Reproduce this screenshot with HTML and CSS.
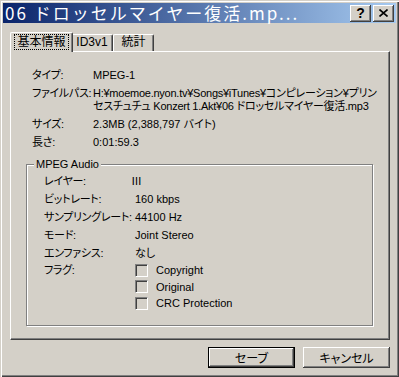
FILE: index.html
```html
<!DOCTYPE html>
<html lang="ja">
<head>
    <meta charset="UTF-8">
    <meta name="viewport" content="width=device-width, initial-scale=1.0">
    <title>プロパティ</title>
    <link rel="stylesheet" href="styles.css">
</head>
<body>
    <div class="window">
        <!-- title bar -->
        <div class="titlebar">
            <span class="title">06 ドロッセルマイヤー復活.mp...</span>
            <div class="title-buttons">
                <button class="tbtn help">?</button>
                <button class="tbtn">
                    <svg width="9" height="8" viewBox="0 0 9 8">
                        <path d="M0.5 0.5 L8.5 7.5 M8.5 0.5 L0.5 7.5" stroke="#000" stroke-width="1.6" fill="none"/>
                    </svg>
                </button>
            </div>
        </div>

        <div class="body">
            <div class="tabs">
                <div class="tab active"><span class="focus">基本情報</span></div>
                <div class="tab tab-id3">ID3v1</div>
                <div class="tab tab-stats">統計</div>
            </div>

            <div class="panel">
                <div class="info">
                    <div class="label">タイプ:</div>
                    <div class="value">MPEG-1</div>
                    <div class="label">ファイルパス:</div>
                    <div class="value path">H:¥moemoe.nyon.tv¥Songs¥iTunes¥コンピレーション¥プリン<br>セスチュチュ Konzert 1.Akt¥06 ドロッセルマイヤー復活.mp3</div>
                    <div class="label">サイズ:</div>
                    <div class="value">2.3MB (2,388,797 バイト)</div>
                    <div class="label">長さ:</div>
                    <div class="value">0:01:59.3</div>
                </div>

                <fieldset class="group">
                    <legend>MPEG Audio</legend>
                    <div class="audio">
                        <div class="label">レイヤー:</div>
                        <div class="value roman">Ⅲ</div>
                        <div class="label">ビットレート:</div>
                        <div class="value">160 kbps</div>
                        <div class="label">サンプリングレート:</div>
                        <div class="value">44100 Hz</div>
                        <div class="label">モード:</div>
                        <div class="value">Joint Stereo</div>
                        <div class="label">エンファシス:</div>
                        <div class="value">なし</div>
                        <div class="label flag-label">フラグ:</div>
                        <div class="flags">
                            <div class="flag"><span class="check"></span>Copyright</div>
                            <div class="flag"><span class="check"></span>Original</div>
                            <div class="flag"><span class="check"></span>CRC Protection</div>
                        </div>
                    </div>
                </fieldset>
            </div>

            <div class="actions">
                <button class="btn default">セーブ</button>
                <button class="btn">キャンセル</button>
            </div>
        </div>
    </div>
</body>
</html>
```

FILE: styles.css
```css
* {
    box-sizing: border-box;
}
body {
    margin: 0;
    background: #d4d0c8;
    font-family: "Liberation Sans", "Noto Sans CJK JP", sans-serif;
    font-size: 11px;
    color: #000;
    font-feature-settings: "palt";
}
.window {
    width: 399px;
    height: 377px;
    padding: 3px;
    background: #d4d0c8;
    box-shadow: inset 1px 1px #d4d0c8, inset 2px 2px #fff, inset -1px -1px #404040, inset -2px -2px #808080;
    display: flex;
    flex-direction: column;
}

/* title bar */
.titlebar {
    height: 20px;
    padding: 0 2px;
    background: linear-gradient(to right, #0a246a, #a6caf0);
    display: flex;
    align-items: center;
    justify-content: space-between;
}
.title {
    color: #fff;
    font-family: "Noto Sans CJK JP", sans-serif;
    font-feature-settings: normal;
    font-size: 17px;
    line-height: 20px;
    letter-spacing: 2px;
    white-space: nowrap;
}
.title-buttons {
    display: flex;
    gap: 2px;
}
.tbtn {
    width: 21px;
    height: 17px;
    padding: 0;
    border: none;
    background: #d4d0c8;
    box-shadow: inset -1px -1px #404040, inset 1px 1px #fff, inset -2px -2px #808080, inset 2px 2px #d4d0c8;
    display: flex;
    align-items: center;
    justify-content: center;
}
.help {
    font-family: "Liberation Sans", sans-serif;
    font-size: 14px;
    font-weight: bold;
    line-height: 17px;
}

/* body */
.body {
    flex: 1;
    padding: 9px 6px 0 7px;
    display: flex;
    flex-direction: column;
}
.tabs {
    height: 19px;
    padding-left: 2px;
    display: flex;
    align-items: flex-end;
}
.tab {
    height: 17px;
    border-top: 1px solid #fff;
    border-left: 1px solid #fff;
    border-right: 1px solid #404040;
    border-radius: 2px 2px 0 0;
    box-shadow: inset -1px 0 #808080;
    font-size: 12px;
    line-height: 15px;
    text-align: center;
    background: #d4d0c8;
}
.tab.active {
    width: 63px;
    height: 20px;
    margin: 0 -2px -1px -2px;
    position: relative;
    z-index: 1;
    padding-top: 2px;
}
.focus {
    display: inline-block;
    padding: 0 2px;
    line-height: 14px;
    outline: 1px dotted #000;
}
.tab-id3 {
    width: 42px;
}
.tab-stats {
    width: 41px;
}

.panel {
    height: 289px;
    padding: 17px 16px 0 15px;
    border-top: 1px solid #fff;
    border-left: 1px solid #fff;
    border-right: 1px solid #404040;
    border-bottom: 1px solid #404040;
    box-shadow: inset -1px -1px #808080;
}
.info {
    padding-left: 6px;
    display: grid;
    grid-template-columns: 61px auto;
    row-gap: 5px;
    line-height: 13px;
}
.label {
    font-size: 11px;
    letter-spacing: -0.3px;
    white-space: nowrap;
}
.value {
    white-space: nowrap;
}
.path {
    letter-spacing: -0.25px;
}

/* group box */
.group {
    margin: 9px 0 0 0;
    padding: 1px 7px 13px 7px;
    border: 1px solid #808080;
    box-shadow: inset 1px 1px #fff, 1px 1px #fff;
    min-inline-size: 0;
}
.group legend {
    padding: 0 2px;
    line-height: 13px;
    background: #d4d0c8;
}
.audio {
    padding-left: 10px;
    display: grid;
    grid-template-columns: 91px auto;
    grid-template-rows: repeat(5, 18px) auto;
    line-height: 18px;
}
.roman {
    margin-left: -4px;
}
.flag-label {
    line-height: 16.5px;
}
.flag {
    height: 16.5px;
    display: flex;
    align-items: center;
    gap: 8px;
}
.check {
    width: 13px;
    height: 13px;
    border-top: 1px solid #808080;
    border-left: 1px solid #808080;
    border-bottom: 1px solid #fff;
    border-right: 1px solid #fff;
    box-shadow: inset 1px 1px #404040, inset -1px -1px #d4d0c8;
    background: #d4d0c8;
}

/* buttons */
.actions {
    margin-top: 7px;
    display: flex;
    justify-content: flex-end;
    gap: 8px;
}
.btn {
    width: 87px;
    height: 21px;
    padding: 0;
    border: none;
    background: #d4d0c8;
    font-family: "Liberation Sans", "Noto Sans CJK JP", sans-serif;
    font-feature-settings: "palt";
    font-size: 12px;
    color: #000;
    box-shadow: inset -1px -1px #404040, inset 1px 1px #fff, inset -2px -2px #808080, inset 2px 2px #d4d0c8;
}
.btn.default {
    border: 1px solid #000;
    box-shadow: inset -1px -1px #404040, inset 1px 1px #fff, inset -2px -2px #808080;
}
```
